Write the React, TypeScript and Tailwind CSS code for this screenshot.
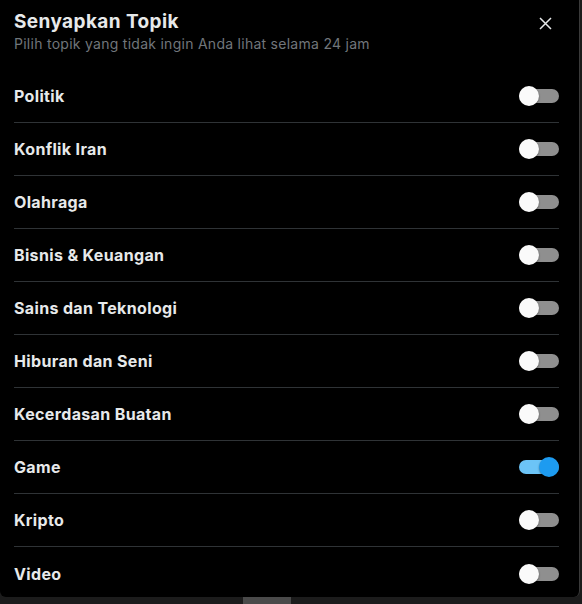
import { useState } from 'react';

const topics = [
  'Politik',
  'Konflik Iran',
  'Olahraga',
  'Bisnis & Keuangan',
  'Sains dan Teknologi',
  'Hiburan dan Seni',
  'Kecerdasan Buatan',
  'Game',
  'Kripto',
  'Video',
];

const Toggle = ({ on, onChange }: { on: boolean; onChange: () => void }) => (
  <button
    type="button"
    role="switch"
    aria-checked={on}
    onClick={onChange}
    className="relative flex h-[20px] w-[40px] items-center"
  >
    <span className={`h-[14px] w-full rounded-full ${on ? 'bg-[#6cc4f7]' : 'bg-[#8f8f8f]'}`} />
    <span
      className={`absolute top-0 h-[20px] w-[20px] rounded-full shadow-[0_1px_2px_rgba(0,0,0,0.4)] ${
        on ? 'left-[20px] bg-[#1d9bf0]' : 'left-0 bg-[#fafafa]'
      }`}
    />
  </button>
);

export default function App() {
  const [muted, setMuted] = useState<Record<string, boolean>>({ Game: true });

  return (
    <div className="h-[604px] w-[582px] overflow-hidden bg-[#1c1c1c] font-['Inter',sans-serif]">
      <div className="h-[597px] w-[580px] overflow-hidden rounded-b-[6px] border-r border-[#3a3a3a] bg-black">
        <div className="flex items-start justify-between pl-[14px] pr-[22px] pt-[10px]">
          <div>
            <h2 className="text-[19px] font-bold leading-[24px] tracking-[0.4px] text-[#e7e9ea]">Senyapkan Topik</h2>
            <p className="text-[14px] leading-[20px] tracking-[0.27px] text-[#71767b]">
              Pilih topik yang tidak ingin Anda lihat selama 24 jam
            </p>
          </div>
          <button type="button" aria-label="Tutup" className="mr-[5px] mt-[7px] text-[#e7e9ea]">
            <svg width="13" height="13" viewBox="0 0 13 13" fill="none" stroke="currentColor" strokeWidth="1.5">
              <path d="M1 1l11 11M12 1L1 12" />
            </svg>
          </button>
        </div>
        <ul className="mt-[16px] pl-[14px] pr-[20px]">
          {topics.map((topic, index) => (
            <li
              key={topic}
              className={`flex h-[53px] items-center justify-between ${
                index < topics.length - 1 ? 'border-b border-[#2f3336]' : ''
              }`}
            >
              <span className="text-[16px] font-bold tracking-[0.35px] text-[#e7e9ea]">{topic}</span>
              <Toggle
                on={!!muted[topic]}
                onChange={() => setMuted((m) => ({ ...m, [topic]: !m[topic] }))}
              />
            </li>
          ))}
        </ul>
      </div>
      <div className="ml-[243px] h-[7px] w-[48px] bg-[#4a4a4a]" />
    </div>
  );
}
